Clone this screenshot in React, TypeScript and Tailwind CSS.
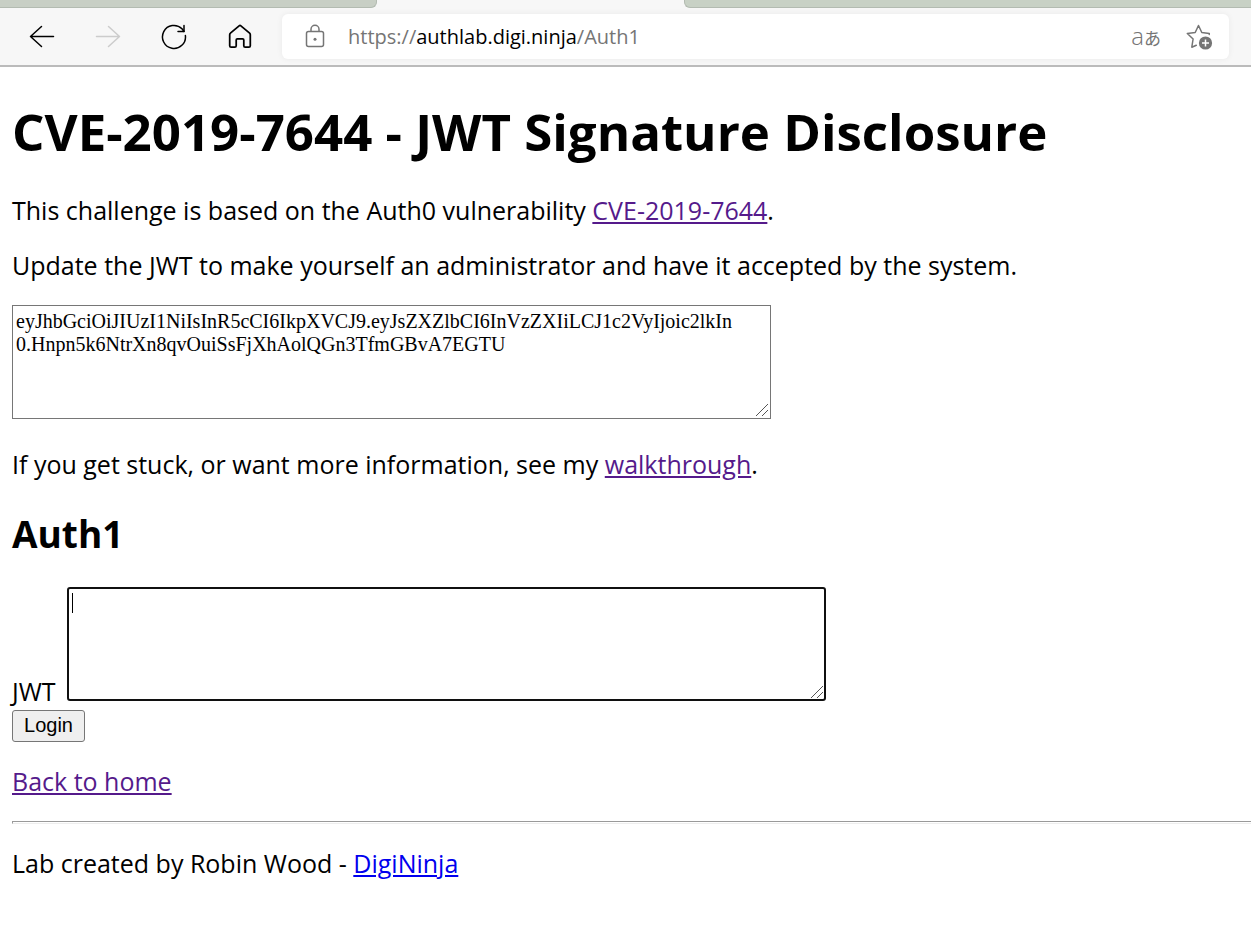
import { useState } from "react";

const TOKEN =
  "eyJhbGciOiJIUzI1NiIsInR5cCI6IkpXVCJ9.eyJsZXZlbCI6InVzZXIiLCJ1c2VyIjoic2lkIn\n0.Hnpn5k6NtrXn8qvOuiSsFjXhAolQGn3TfmGBvA7EGTU";

function BackIcon() {
  return (
    <svg width="26" height="26" viewBox="0 0 26 26" fill="none" stroke="currentColor" strokeWidth="1.5" strokeLinecap="round" strokeLinejoin="round" aria-hidden="true">
      <path d="M24.5 12.5H1.5M12.5 2.5L1.5 12.5l11 10" />
    </svg>
  );
}

function ForwardIcon() {
  return (
    <svg width="26" height="26" viewBox="0 0 26 26" fill="none" stroke="currentColor" strokeWidth="1.5" strokeLinecap="round" strokeLinejoin="round" aria-hidden="true">
      <path d="M1.5 12.5h23M13.5 2.5l11 10-11 10" />
    </svg>
  );
}

function ReloadIcon() {
  return (
    <svg width="26" height="26" viewBox="0 0 26 26" fill="none" stroke="currentColor" strokeWidth="1.5" strokeLinecap="round" strokeLinejoin="round" aria-hidden="true">
      <path d="M24.4 11.6A11.5 11.5 0 1 1 21 4.700L23 7.500" />
      <path d="M23 1.500v6h-6" />
    </svg>
  );
}

function HomeIcon() {
  return (
    <svg width="26" height="26" viewBox="0 0 26 26" fill="none" stroke="currentColor" strokeWidth="1.75" strokeLinejoin="round" aria-hidden="true">
      <path d="M12.100 1.800a1.400 1.400 0 0 1 1.800 0l8.700 7.400c.4.4.7.9.7 1.500v11.100c0 .8-.6 1.400-1.400 1.400h-3.700c-.8 0-1.400-.6-1.400-1.400v-5.800c0-.7-.5-1.200-1.200-1.200h-5.200c-.7 0-1.200.5-1.200 1.200v5.800c0 .8-.6 1.400-1.400 1.400H4.100c-.8 0-1.400-.6-1.400-1.400V10.700c0-.6.2-1.100.7-1.500z" />
    </svg>
  );
}

function LockIcon() {
  return (
    <svg width="20" height="26" viewBox="0 0 20 26" fill="none" stroke="currentColor" strokeWidth="1.5" aria-hidden="true">
      <rect x="1.5" y="7.5" width="17" height="15" rx="2" />
      <path d="M6 7.500V5.300a4 4 0 0 1 8 0v2.200" />
      <circle cx="10" cy="15.200" r="1.500" fill="currentColor" stroke="none" />
    </svg>
  );
}

function FavoriteIcon() {
  return (
    <svg width="28" height="28" viewBox="0 0 28 28" fill="none" aria-hidden="true">
      <path
        d="M24.200 11.400l.1-.9-7.500-1-3.300-7-3.300 7-7.900 1 5.800 5.500-1.300 8.200 4.500-2"
        stroke="currentColor"
        strokeWidth="1.500"
        strokeLinejoin="round"
        strokeLinecap="round"
      />
      <circle cx="20.500" cy="20" r="6.600" fill="currentColor" />
      <path d="M20.500 16.500v7M17 20h7" stroke="#fff" strokeWidth="1.500" />
    </svg>
  );
}

function ResizeGrip() {
  return (
    <svg className="pointer-events-none absolute right-[3px] bottom-[3px]" width="12" height="12" viewBox="0 0 12 12" fill="none" stroke="#555555" aria-hidden="true">
      <path d="M0 12L12 0M6 12l6-6" />
    </svg>
  );
}

const toolButton = "flex h-10 w-[66px] items-center justify-center";
const fieldBox = "block h-[114px] w-[759px] max-w-full resize-none bg-white font-['Liberation_Serif',serif] text-[20px] leading-[23px] text-black";

export default function App() {
  const [token, setToken] = useState(TOKEN);
  const [jwt, setJwt] = useState("");

  return (
    <div className="min-h-screen bg-white font-['Open_Sans',sans-serif] text-[25px] leading-[34px] text-black">
      <header className="border-b-2 border-[#bbbbbb] bg-[#f7f7f7]">
        <div className="flex h-2">
          <div className="w-[377px] rounded-br-md border-r border-b border-[#b3bbb1] bg-[#c8cfc5]" />
          <div className="w-[307px]" />
          <div className="flex-1 rounded-bl-md border-b border-l border-[#b3bbb1] bg-[#c8d1c5]" />
        </div>
        <div className="flex items-center pt-1.5 pr-[22px] pb-1.5 pl-[9px]">
          <nav className="flex" aria-label="Browser">
            <button type="button" aria-label="Back" className={toolButton}><BackIcon /></button>
            <button type="button" aria-label="Forward" disabled className={`${toolButton} text-[#cccccc]`}><ForwardIcon /></button>
            <button type="button" aria-label="Reload" className={toolButton}><ReloadIcon /></button>
            <button type="button" aria-label="Home" className={toolButton}><HomeIcon /></button>
          </nav>
          <div className="ml-[9px] flex h-[45px] flex-1 items-center rounded-md bg-white pr-4 pl-[23px] text-[#757575] shadow-[0_0_6px_rgba(0,0,0,0.06)]">
            <LockIcon />
            <a href="https://authlab.digi.ninja/Auth1" className="ml-[23px] flex-1 text-[20px] leading-7">
              https://<span className="text-black">authlab.digi.ninja</span>/Auth1
            </a>
            <button type="button" aria-label="Translate" className="mr-6 flex items-center pb-0.5 leading-7">
              <span className="font-light text-[24px]">a</span>
              <span className="pt-1 font-['Noto_Sans_CJK_JP',sans-serif] text-[17px]">あ</span>
            </button>
            <button type="button" aria-label="Add to favorites"><FavoriteIcon /></button>
          </div>
        </div>
      </header>

      <main className="pt-[31px] pl-3">
        <h1 className="text-[51px] leading-[66px] font-bold">CVE-2019-7644 - JWT Signature Disclosure</h1>
        <p className="mt-[29px]">
          This challenge is based on the Auth0 vulnerability{" "}
          <a href="#cve" className="text-[#551a8b] underline">CVE-2019-7644</a>.
        </p>
        <p className="mt-[21px]">Update the JWT to make yourself an administrator and have it accepted by the system.</p>
        <div className="relative mt-[23px] w-fit max-w-full">
          <textarea
            aria-label="Current JWT"
            value={token}
            onChange={(e) => setToken(e.target.value)}
            spellCheck={false}
            className={`${fieldBox} border border-[#767676] px-[3px] py-1`}
          />
          <ResizeGrip />
        </div>
        <p className="mt-7">
          If you get stuck, or want more information, see my{" "}
          <a href="#walkthrough" className="text-[#551a8b] underline">walkthrough</a>.
        </p>
        <h2 className="mt-7 text-[37px] leading-[50px] font-bold">Auth1</h2>
        <form className="mt-7" onSubmit={(e) => e.preventDefault()}>
          <div className="flex items-end gap-[7px]">
            <label htmlFor="jwt" className="-mb-[7px] w-12 whitespace-nowrap">JWT</label>
            <div className="relative">
              <textarea
                id="jwt"
                value={jwt}
                onChange={(e) => setJwt(e.target.value)}
                className={`${fieldBox} rounded-[3px] border-2 border-[#101010] px-[3px] py-1 caret-transparent outline-none`}
              />
              {jwt === "" && <span className="pointer-events-none absolute top-1.5 left-[5px] h-5 w-px bg-black" />}
              <ResizeGrip />
            </div>
          </div>
          <button
            type="submit"
            className="mt-[9px] block h-8 w-[73px] rounded-[3px] border border-[#767676] bg-[#efefef] pb-0.5 font-['Liberation_Sans',sans-serif] text-[20px] leading-7"
          >
            Login
          </button>
        </form>
        <p className="mt-[22px]">
          <a href="#home" className="text-[#551a8b] underline">Back to home</a>
        </p>
        <hr className="mt-[23px] h-[3px] border-t border-b border-l border-t-[#9a9a9a] border-b-[#eeeeee] border-l-[#9a9a9a]" />
        <p className="mt-[22px]">
          Lab created by Robin Wood - <a href="#digininja" className="text-[#0000ee] underline">DigiNinja</a>
        </p>
      </main>
    </div>
  );
}
